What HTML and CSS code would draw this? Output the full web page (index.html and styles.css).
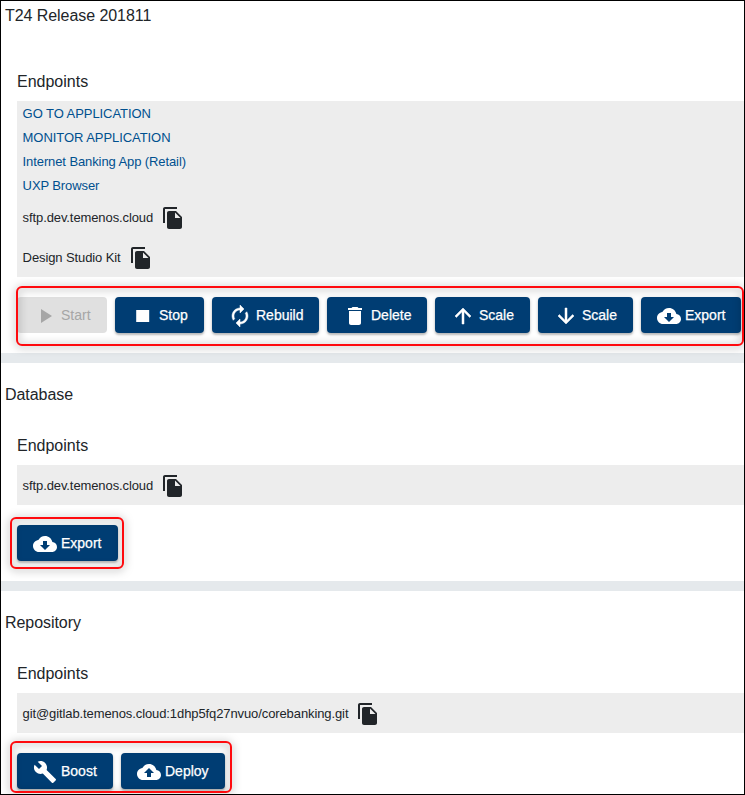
FILE: index.html
```
<!DOCTYPE html>
<html lang="en">
<head>
<meta charset="utf-8">
<title>Environment</title>
<link rel="stylesheet" href="styles.css">
</head>
<body>
<svg class="defs" aria-hidden="true">
  <symbol id="copy" viewBox="0 0 24 24"><path d="M16 1H4c-1.1 0-2 .9-2 2v14h2V3h12V1zm-1 4l6 6v10c0 1.1-.9 2-2 2H7.99C6.89 23 6 22.1 6 21l.01-14c0-1.1.89-2 1.99-2h7zm-1 7h5.5L14 6.5V12z"/></symbol>
  <symbol id="play" viewBox="0 0 24 24"><path d="M8 5v14l11-7z"/></symbol>
  <symbol id="stop" viewBox="0 0 24 24"><path d="M5.200 6h13v12h-13z"/></symbol>
  <symbol id="renew" viewBox="0 0 24 24"><path d="M12 6v3l4-4-4-4v3c-4.42 0-8 3.58-8 8 0 1.57.46 3.03 1.24 4.26L6.7 14.8c-.45-.83-.7-1.79-.7-2.8 0-3.31 2.69-6 6-6zm6.76 1.74L17.3 9.2c.44.84.7 1.79.7 2.8 0 3.31-2.69 6-6 6v-3l-4 4 4 4v-3c4.42 0 8-3.58 8-8 0-1.57-.46-3.03-1.24-4.26z"/></symbol>
  <symbol id="trash" viewBox="0 0 24 24"><path d="M6 19c0 1.1.9 2 2 2h8c1.1 0 2-.9 2-2V7H6v12zM19 4h-3.500l-1-1h-5l-1 1H5v2h14V4z"/></symbol>
  <symbol id="up" viewBox="0 0 24 24"><path d="M4 12l1.410 1.410L11 7.830V20h2V7.830l5.580 5.590L20 12l-8-8-8 8z"/></symbol>
  <symbol id="down" viewBox="0 0 24 24"><path d="M20 12l-1.410-1.410L13 16.170V4h-2v12.170l-5.580-5.590L4 12l8 8 8-8z"/></symbol>
  <symbol id="cloud-down" viewBox="0 0 24 24"><path d="M19.350 10.040C18.670 6.590 15.640 4 12 4 9.110 4 6.600 5.640 5.350 8.040 2.340 8.360 0 10.910 0 14c0 3.310 2.690 6 6 6h13c2.760 0 5-2.240 5-5 0-2.640-2.050-4.780-4.650-4.960zM17 13l-5 5-5-5h3V9h4v4h3z"/></symbol>
  <symbol id="cloud-up" viewBox="0 0 24 24"><path d="M19.350 10.040C18.670 6.590 15.640 4 12 4 9.110 4 6.600 5.640 5.350 8.040 2.340 8.360 0 10.910 0 14c0 3.310 2.690 6 6 6h13c2.760 0 5-2.240 5-5 0-2.640-2.050-4.780-4.650-4.960zM14 13v4h-4v-4H7l5-5 5 5h-3z"/></symbol>
  <symbol id="wrench" viewBox="0 0 24 24"><path d="M22.700 19l-9.100-9.100c.9-2.300.4-5-1.500-6.900-2-2-5-2.400-7.400-1.300L9 6 6 9 1.600 4.700C.4 7.100.9 10.100 2.900 12.100c1.900 1.900 4.600 2.400 6.900 1.500l9.100 9.100c.4.4 1 .4 1.400 0l2.300-2.300c.5-.4.5-1.100.1-1.400z"/></symbol>
</svg>
<main class="frame">
  <section class="card card-release">
    <h2 class="title">T24 Release 201811</h2>
    <h3 class="subtitle">Endpoints</h3>
    <div class="endpoints">
      <a class="link caps">GO TO APPLICATION</a>
      <a class="link caps">MONITOR APPLICATION</a>
      <a class="link">Internet Banking App (Retail)</a>
      <a class="link">UXP Browser</a>
      <div class="entry"><span>sftp.dev.temenos.cloud</span><svg class="icon"><use href="#copy"/></svg></div>
      <div class="entry"><span>Design Studio Kit</span><svg class="icon"><use href="#copy"/></svg></div>
    </div>
    <div class="actions">
      <button class="btn start" disabled><svg class="icon"><use href="#play"/></svg><span>Start</span></button>
      <button class="btn stop"><svg class="icon"><use href="#stop"/></svg><span>Stop</span></button>
      <button class="btn rebuild"><svg class="icon bold"><use href="#renew"/></svg><span>Rebuild</span></button>
      <button class="btn delete"><svg class="icon"><use href="#trash"/></svg><span>Delete</span></button>
      <button class="btn scale"><svg class="icon bold"><use href="#up"/></svg><span>Scale</span></button>
      <button class="btn scale"><svg class="icon bold"><use href="#down"/></svg><span>Scale</span></button>
      <button class="btn export"><svg class="icon"><use href="#cloud-down"/></svg><span>Export</span></button>
      <i class="mark mark-release"></i>
    </div>
  </section>
  <section class="card card-database">
    <h2 class="title">Database</h2>
    <h3 class="subtitle">Endpoints</h3>
    <div class="endpoints">
      <div class="entry"><span>sftp.dev.temenos.cloud</span><svg class="icon"><use href="#copy"/></svg></div>
    </div>
    <div class="actions">
      <button class="btn export"><svg class="icon"><use href="#cloud-down"/></svg><span>Export</span></button>
      <i class="mark mark-database"></i>
    </div>
  </section>
  <section class="card card-repository">
    <h2 class="title">Repository</h2>
    <h3 class="subtitle">Endpoints</h3>
    <div class="endpoints">
      <div class="entry"><span>git@gitlab.temenos.cloud:1dhp5fq27nvuo/corebanking.git</span><svg class="icon"><use href="#copy"/></svg></div>
    </div>
    <div class="actions">
      <button class="btn boost"><svg class="icon"><use href="#wrench"/></svg><span>Boost</span></button>
      <button class="btn deploy"><svg class="icon"><use href="#cloud-up"/></svg><span>Deploy</span></button>
      <i class="mark mark-repository"></i>
    </div>
  </section>
</main>
</body>
</html>
```
FILE: styles.css
```
* { box-sizing: border-box; }
body {
  margin: 0;
  background: #fff;
  color: #212529;
  font-family: "Liberation Sans", Arial, sans-serif;
  font-size: 13px;
}
.defs { display: none; }
.frame {
  display: flex;
  flex-direction: column;
  gap: 10px;
  width: 745px;
  height: 795px;
  border: 1px solid #000;
  background: #e5e9ec;
  overflow: hidden;
}
.card { flex: none; background: #fff; padding-left: 4px; }
.card-release { height: 352px; }
.card-database, .card-repository { height: 218px; padding-top: 17px; }
.title, .subtitle { margin: 0; font-size: 16px; font-weight: 400; line-height: 30px; }
.title { letter-spacing: -0.06px; }
.subtitle { margin: 36px 0 4px 12px; }
.card-database .subtitle, .card-repository .subtitle { margin-top: 21px; margin-bottom: 4px; }
.endpoints { margin-left: 12px; padding-left: 5.6px; background: #ededed; letter-spacing: -0.1px; }
.link { display: block; height: 24px; line-height: 26px; color: #00508f; }
.link.caps { letter-spacing: -0.06px; }
.entry { display: flex; align-items: center; gap: 8px; height: 40px; }
.entry .icon { margin-top: 2px; }
.icon { flex: none; width: 24px; height: 24px; fill: currentColor; }
.icon.bold { stroke: currentColor; stroke-width: .5px; }
.actions { position: relative; display: flex; gap: 8px; margin: 20px 0 0 12px; }
.btn {
  display: flex;
  flex: none;
  align-items: center;
  gap: 4px;
  height: 36px;
  padding: 0 0 0 16px;
  border: 0;
  border-radius: 4px;
  background: #003d73;
  color: #fff;
  font: 14px "Liberation Sans", Arial, sans-serif;
  -webkit-text-stroke: 0.25px currentColor;
  white-space: nowrap;
  box-shadow: 0 2px 2px rgba(0, 0, 0, .2), 0 1px 4px rgba(0, 0, 0, .15);
}
.btn .icon { margin-top: 2px; }
.btn:disabled { background: #e0e0e0; color: #a6a6a6; box-shadow: none; -webkit-text-stroke: 0; }
.start { width: 90px; }
.stop { width: 89px; }
.rebuild { width: 107px; }
.delete { width: 100px; }
.scale { width: 95px; }
.export { width: 101px; }
.card-release .export { width: 100px; }
.boost { width: 96px; }
.deploy { width: 104px; }
.mark {
  position: absolute;
  border: 2px solid #ff0a0e;
  border-radius: 6px;
  filter: drop-shadow(0 1px 4px rgba(0, 0, 0, .5));
  pointer-events: none;
}
.mark-release { left: -1px; top: -11px; width: 728px; height: 60px; }
.mark-database { left: -7px; top: -8px; width: 114px; height: 52px; }
.mark-repository { left: -7px; top: -12px; width: 222px; height: 52px; }
```
